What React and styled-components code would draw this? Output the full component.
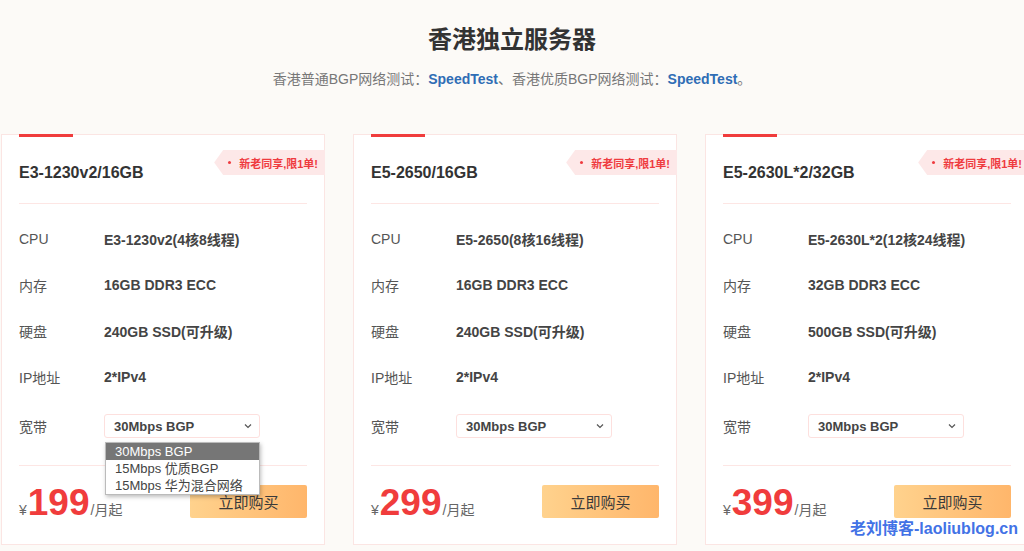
import React from 'react';
import styled, { createGlobalStyle } from 'styled-components';

const GlobalStyle = createGlobalStyle`
  html, body {
    margin: 0;
    padding: 0;
    background: #fcfaf7;
    font-family: "Liberation Sans", "Noto Sans CJK SC", sans-serif;
    color: #333;
  }
  #root {
    width: 1024px;
    height: 551px;
    overflow: hidden;
    position: relative;
  }
`;

const Page = styled.div`
  width: 1024px;
  height: 551px;
  overflow: hidden;
`;

const Header = styled.div`
  text-align: center;
  padding-top: 26px;
  height: 134px;
  box-sizing: border-box;
`;

const Title = styled.h1`
  margin: 0;
  font-size: 24px;
  line-height: 28px;
  font-weight: bold;
  color: #333;
`;

const SubTitle = styled.p`
  margin: 15px 0 0;
  font-size: 14px;
  line-height: 20px;
  color: #777;
`;

const TestLink = styled.a`
  color: #2f6db5;
  font-weight: bold;
  text-decoration: none;
`;

const CardRow = styled.div`
  display: flex;
  gap: 28px;
  padding-left: 1px;
`;

const Card = styled.div`
  position: relative;
  flex: 0 0 324px;
  box-sizing: border-box;
  height: 411px;
  background: #fff;
  border: 1px solid #fbe5e3;
  padding: 0 17px;
`;

const TopBar = styled.div`
  width: 54px;
  height: 3px;
  margin-top: -1px;
  background: #f03c3c;
`;

const CardHead = styled.div`
  height: 67px;
  box-sizing: border-box;
  padding-top: 25px;
  border-bottom: 1px solid #fde6e4;
`;

const ServerName = styled.h2`
  margin: 0;
  font-size: 16px;
  line-height: 22px;
  font-weight: bold;
  color: #333;
`;

const Badge = styled.div`
  position: absolute;
  top: 15px;
  right: -1px;
  height: 25px;
  box-sizing: border-box;
  padding: 0 7px 0 14px;
  display: flex;
  align-items: center;
  gap: 8px;
  background: #fde8e8;
  clip-path: polygon(0 50%, 9px 0, 100% 0, 100% 100%, 9px 100%);
  color: #ef3b3f;
  font-size: 11px;
  font-weight: bold;
  white-space: nowrap;
`;

const Dot = styled.span`
  width: 3px;
  height: 3px;
  border-radius: 50%;
  background: #ef3b3f;
`;

const Specs = styled.div`
  padding-top: 12px;
  height: 262px;
  box-sizing: border-box;
  border-bottom: 1px solid #fde6e4;
`;

const SpecRow = styled.div`
  display: flex;
  align-items: center;
  height: 46px;
  margin-top: ${p => (p.$last ? '3px' : '0')};
  position: relative;
`;

const Label = styled.div`
  width: 85px;
  font-size: 14px;
  color: #555;
`;

const Value = styled.div`
  font-size: 14px;
  font-weight: bold;
  color: #444;
`;

const Select = styled.div`
  width: 156px;
  height: 24px;
  box-sizing: border-box;
  border: 1px solid #fde0de;
  border-radius: 3px;
  display: flex;
  align-items: center;
  justify-content: space-between;
  padding: 0 6px 0 9px;
  font-size: 13px;
  font-weight: bold;
  color: #444;
`;

const Options = styled.ul`
  position: absolute;
  left: 86px;
  top: 39px;
  width: 155px;
  box-sizing: border-box;
  margin: 0;
  padding: 0;
  list-style: none;
  background: #fff;
  border: 1px solid #bbb;
  box-shadow: 1px 2px 4px rgba(0, 0, 0, 0.25);
  z-index: 5;
`;

const Option = styled.li`
  height: 17px;
  line-height: 17px;
  padding-left: 9px;
  font-size: 13px;
  color: ${p => (p.$active ? '#fff' : '#444')};
  background: ${p => (p.$active ? '#767676' : '#fff')};
`;

const Footer = styled.div`
  display: flex;
  align-items: flex-start;
  justify-content: space-between;
  padding-top: 19px;
`;

const Price = styled.div`
  display: flex;
  align-items: baseline;
  color: #666;
  font-size: 14px;
  line-height: 1;
  margin-top: -1px;
`;

const Amount = styled.span`
  font-size: 37px;
  font-weight: bold;
  color: #f03c3c;
  margin: 0 1px;
`;

const BuyButton = styled.button`
  width: 117px;
  height: 33px;
  border: none;
  border-radius: 2px;
  background: linear-gradient(90deg, #ffd28d, #ffb66b);
  font-family: inherit;
  font-size: 15px;
  color: #3a3a3a;
  cursor: pointer;
`;

const Watermark = styled.div`
  position: absolute;
  left: 850px;
  top: 515px;
  font-size: 16px;
  font-weight: bold;
  color: #4272e6;
  white-space: nowrap;
  z-index: 10;
`;

const Chevron = () => (
  <svg width="10" height="10" viewBox="0 0 10 10">
    <path d="M2 3.5 L5 6.5 L8 3.5" fill="none" stroke="#555" strokeWidth="1.2" />
  </svg>
);

const servers = [
  { name: 'E3-1230v2/16GB', cpu: 'E3-1230v2(4核8线程)', ram: '16GB DDR3 ECC', disk: '240GB SSD(可升级)', price: 199, open: true },
  { name: 'E5-2650/16GB', cpu: 'E5-2650(8核16线程)', ram: '16GB DDR3 ECC', disk: '240GB SSD(可升级)', price: 299 },
  { name: 'E5-2630L*2/32GB', cpu: 'E5-2630L*2(12核24线程)', ram: '32GB DDR3 ECC', disk: '500GB SSD(可升级)', price: 399 },
];

const bandwidths = ['30Mbps BGP', '15Mbps 优质BGP', '15Mbps 华为混合网络'];

export default function App() {
  return (
    <Page>
      <GlobalStyle />
      <Header>
        <Title>香港独立服务器</Title>
        <SubTitle>
          香港普通BGP网络测试：<TestLink>SpeedTest</TestLink>、香港优质BGP网络测试：<TestLink>SpeedTest</TestLink>。
        </SubTitle>
      </Header>
      <CardRow>
        {servers.map(s => (
          <Card key={s.name}>
            <TopBar />
            <Badge><Dot />新老同享,限1单!</Badge>
            <CardHead>
              <ServerName>{s.name}</ServerName>
            </CardHead>
            <Specs>
              <SpecRow><Label>CPU</Label><Value>{s.cpu}</Value></SpecRow>
              <SpecRow><Label>内存</Label><Value>{s.ram}</Value></SpecRow>
              <SpecRow><Label>硬盘</Label><Value>{s.disk}</Value></SpecRow>
              <SpecRow><Label>IP地址</Label><Value>2*IPv4</Value></SpecRow>
              <SpecRow $last>
                <Label>宽带</Label>
                <Select>{bandwidths[0]}<Chevron /></Select>
                {s.open && (
                  <Options>
                    {bandwidths.map((b, i) => (
                      <Option key={b} $active={i === 0}>{b}</Option>
                    ))}
                  </Options>
                )}
              </SpecRow>
            </Specs>
            <Footer>
              <Price>¥<Amount>{s.price}</Amount>/月起</Price>
              <BuyButton>立即购买</BuyButton>
            </Footer>
          </Card>
        ))}
      </CardRow>
      <Watermark>老刘博客-laoliublog.cn</Watermark>
    </Page>
  );
}
